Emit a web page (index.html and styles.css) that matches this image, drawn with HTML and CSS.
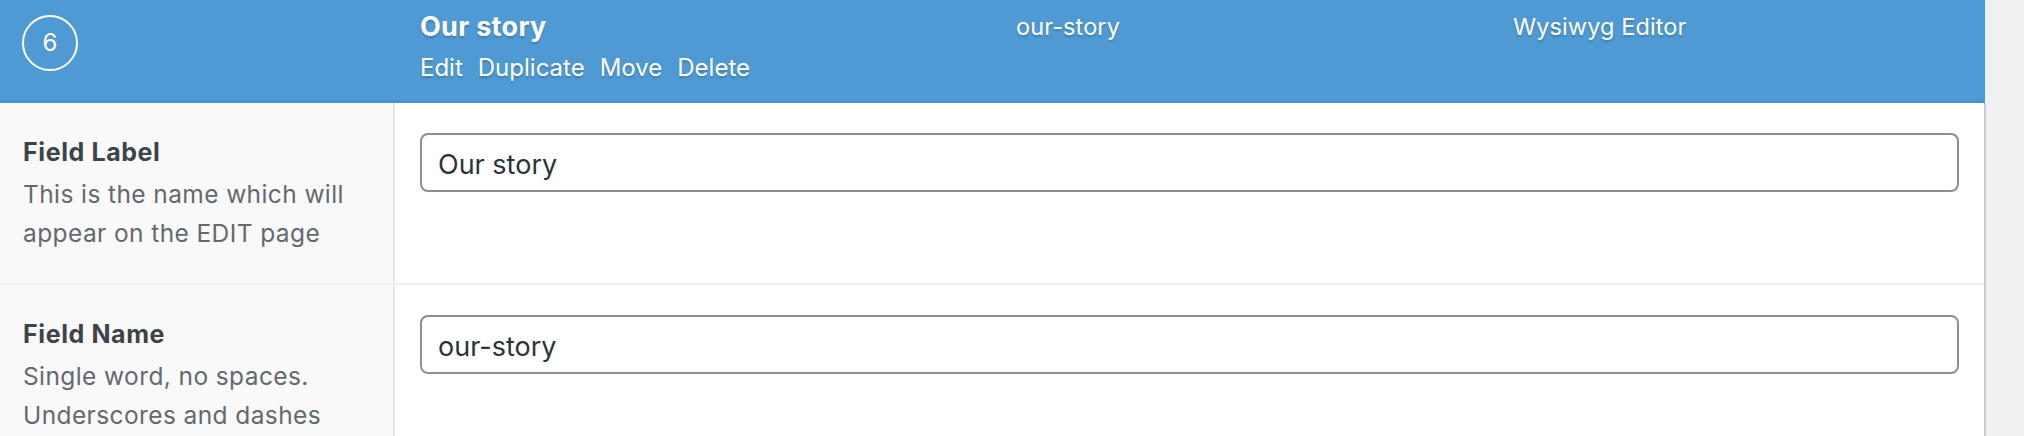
FILE: index.html
```html
<!DOCTYPE html>
<html lang="en">
<head>
<meta charset="utf-8">
<title>Field settings</title>
<link rel="stylesheet" href="styles.css">
</head>
<body>
<div class="panel">
  <div class="field-head">
    <div class="col col-order"><span class="order">6</span></div>
    <div class="col col-label">
      <strong class="title">Our story</strong>
      <div class="actions">
        <a href="#">Edit</a>
        <a href="#">Duplicate</a>
        <a href="#">Move</a>
        <a href="#">Delete</a>
      </div>
    </div>
    <div class="col col-name">our-story</div>
    <div class="col col-type">Wysiwyg Editor</div>
  </div>
  <div class="settings">
    <div class="row">
      <div class="row-label">
        <label class="label">Field Label</label>
        <p class="desc">This is the name which will appear on the EDIT page</p>
      </div>
      <div class="row-input">
        <input class="text-input" type="text" value="Our story">
      </div>
    </div>
    <div class="row">
      <div class="row-label">
        <label class="label">Field Name</label>
        <p class="desc">Single word, no spaces. Underscores and dashes allowed</p>
      </div>
      <div class="row-input">
        <input class="text-input" type="text" value="our-story">
      </div>
    </div>
  </div>
</div>
</body>
</html>
```
FILE: styles.css
```css
html, body {
  margin: 0;
  padding: 0;
}
body {
  background: #f0f0f1;
  font-family: Inter, "Noto Sans", "Liberation Sans", sans-serif;
  color: #3c434a;
}
.panel {
  width: 1986px;
}
.field-head {
  display: grid;
  grid-template-columns: 420px 596px 497px 1fr;
  height: 100px;
  width: 1985px;
  background: #4f9ad4;
  border-bottom: 3px solid #4891cb;
  color: #fff;
  text-shadow: 0 2px 2px rgba(0, 0, 0, 0.18);
}
.col {
  padding-top: 11px;
  font-size: 23.5px;
  letter-spacing: 0.1px;
  line-height: 32px;
}
.col-order {
  padding: 15px 0 0 22px;
}
.order {
  display: flex;
  align-items: center;
  justify-content: center;
  width: 52px;
  height: 52px;
  border: 2px solid #fff;
  border-radius: 50%;
  font-size: 24px;
  text-shadow: none;
}
.title {
  display: block;
  font-size: 27px;
  font-weight: 700;
  letter-spacing: 0.3px;
  line-height: 32px;
}
.actions {
  display: flex;
  gap: 15px;
  margin-top: 7px;
  font-size: 24px;
  letter-spacing: 0;
  line-height: 36px;
}
.actions a {
  color: #fff;
  text-decoration: none;
}
.settings {
  border-right: 2px solid #c8cacd;
  width: 1984px;
  background: #fff;
}
.row {
  display: grid;
  grid-template-columns: 395px 1fr;
  border-bottom: 2px solid #f0f0f1;
}
.row-label {
  background: #f9f9f9;
  border-right: 2px solid #e6e6e6;
  padding: 34px 20px 31px 23px;
}
.label {
  display: block;
  font-size: 25px;
  font-weight: 700;
  letter-spacing: 0.6px;
  line-height: 30px;
  color: #3c434a;
}
.desc {
  margin: 8px 0 0;
  font-size: 24.5px;
  letter-spacing: 0.4px;
  line-height: 38.5px;
  color: #646970;
}
.row-input {
  padding: 30px 25px;
}
.text-input {
  display: block;
  box-sizing: border-box;
  width: 100%;
  height: 59px;
  margin: 0;
  padding: 3px 16px 0;
  border: 2px solid #8c8f94;
  border-radius: 8px;
  background: #fff;
  font-family: Inter, "Noto Sans", "Liberation Sans", sans-serif;
  font-size: 27px;
  color: #2c3338;
  outline: none;
}
```
